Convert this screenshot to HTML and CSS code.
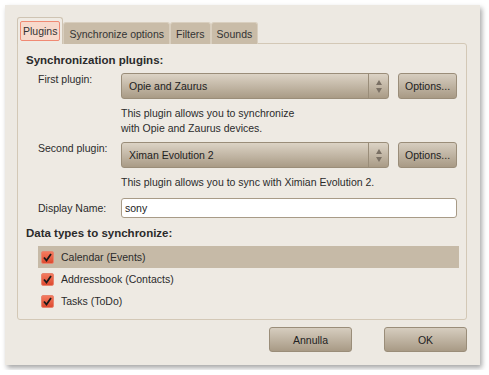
FILE: index.html
```html
<!DOCTYPE html>
<html lang="en">
<head>
  <meta charset="UTF-8">
  <title>Sync settings</title>
  <link rel="stylesheet" href="styles.css">
</head>
<body>
  <div class="window">
    <div class="tabs">
      <div class="tab active"><span class="focus">Plugins</span></div>
      <div class="tab">Synchronize options</div>
      <div class="tab">Filters</div>
      <div class="tab">Sounds</div>
    </div>
    <div class="panel">
      <div class="heading">Synchronization plugins:</div>
      <div class="form">
        <div class="label">First plugin:</div>
        <div class="field">
          <div class="combo"><span class="combo-text">Opie and Zaurus</span><span class="spin"><i class="up"></i><i class="down"></i></span></div>
          <button class="btn-options">Options...</button>
        </div>
        <div></div>
        <div class="desc">This plugin allows you to synchronize<br>with Opie and Zaurus devices.</div>

        <div class="label">Second plugin:</div>
        <div class="field">
          <div class="combo"><span class="combo-text">Ximan Evolution 2</span><span class="spin"><i class="up"></i><i class="down"></i></span></div>
          <button class="btn-options">Options...</button>
        </div>
        <div></div>
        <div class="desc desc-last">This plugin allows you to sync with Ximian Evolution 2.</div>

        <div class="label label-input">Display Name:</div>
        <div class="field"><div class="input">sony</div></div>
      </div>
      <div class="heading heading-2">Data types to synchronize:</div>
      <ul class="checks">
        <li class="selected"><span class="box"><svg width="11" height="11" viewBox="0 0 11 11"><path d="M2 5.5 L4.5 8.5 L9 2" fill="none" stroke="#1a1a1a" stroke-width="1.8"/></svg></span>Calendar (Events)</li>
        <li><span class="box"><svg width="11" height="11" viewBox="0 0 11 11"><path d="M2 5.5 L4.5 8.5 L9 2" fill="none" stroke="#1a1a1a" stroke-width="1.8"/></svg></span>Addressbook (Contacts)</li>
        <li><span class="box"><svg width="11" height="11" viewBox="0 0 11 11"><path d="M2 5.5 L4.5 8.5 L9 2" fill="none" stroke="#1a1a1a" stroke-width="1.8"/></svg></span>Tasks (ToDo)</li>
      </ul>
    </div>
    <div class="actions">
      <button class="btn">Annulla</button>
      <button class="btn">OK</button>
    </div>
  </div>
</body>
</html>
```

FILE: styles.css
```css
body {
  margin: 0;
  background: #fff;
  font-family: "Liberation Sans", Arial, sans-serif;
  font-size: 10.5px;
  color: #2b2b2b;
}
.window {
  margin: 5px;
  width: 475px;
  height: 360px;
  box-sizing: border-box;
  padding: 12px 13px 0 12px;
  background: #ede9e2;
  box-shadow: 2px 3px 5px rgba(0, 0, 0, 0.35);
}
.tabs {
  display: flex;
  align-items: flex-end;
  height: 27px;
  margin-bottom: -1px;
  position: relative;
  z-index: 1;
}
.tab {
  height: 22px;
  padding: 0 5px;
  display: flex;
  align-items: center;
  background: #c9bca8;
  border: 1px solid #d9cfbf;
  border-bottom: none;
  border-radius: 3px 3px 0 0;
  color: #333;
  box-sizing: border-box;
}
.tab.active {
  height: 27px;
  padding: 0 2px;
  background: #efebe4;
  border-color: #cfc4b3;
}
.focus {
  padding: 3px 2px;
  background: #f7d9cc;
  border: 1px solid #f08a74;
  border-radius: 2px;
}
.panel {
  height: 277px;
  box-sizing: border-box;
  border: 1px solid #d3c8b6;
  border-radius: 0 3px 3px 3px;
  background: #eeeae3;
  padding: 5px 0 0 8px;
}
.heading {
  font-weight: bold;
  font-size: 11.5px;
  height: 22px;
  line-height: 22px;
}
.heading-2 {
  height: 17px;
  line-height: 17px;
  margin-top: 7px;
}
.form {
  display: grid;
  grid-template-columns: 83px 336px;
  padding-left: 12px;
  margin-top: 2px;
}
.label {
  height: 26px;
  line-height: 13px;
}
.label-input {
  height: 20px;
  line-height: 20px;
}
.field {
  display: flex;
  gap: 9px;
}
.combo {
  width: 269px;
  height: 26px;
  box-sizing: border-box;
  border: 1px solid #9a8d79;
  border-radius: 3px;
  background: linear-gradient(#dcd3c5, #a99b86);
  display: flex;
  align-items: center;
}
.combo-text {
  flex: 1;
  padding-left: 7px;
  color: #222;
}
.spin {
  width: 19px;
  height: 100%;
  border-left: 1px solid #9a8d79;
  display: flex;
  flex-direction: column;
  align-items: center;
  justify-content: center;
  gap: 3px;
}
.up {
  border: 3px solid transparent;
  border-top: none;
  border-bottom: 5px solid #7a7064;
}
.down {
  border: 3px solid transparent;
  border-bottom: none;
  border-top: 5px solid #7a7064;
}
.btn-options {
  width: 59px;
  height: 26px;
  border: 1px solid #9a8d79;
  border-radius: 3px;
  background: linear-gradient(#d6cdbf, #a89a85);
  font: inherit;
  color: #222;
  padding: 0;
}
.desc {
  line-height: 15px;
  padding: 7px 0 6px;
}
.desc.desc-last {
  padding-bottom: 8px;
}
.input {
  width: 336px;
  height: 20px;
  box-sizing: border-box;
  border: 1px solid #a89b87;
  border-radius: 3px;
  background: #fff;
  padding-left: 3px;
  line-height: 18px;
  color: #222;
}
.checks {
  list-style: none;
  margin: 4px 0 0 12px;
  padding: 0;
  width: 421px;
}
.checks li {
  height: 22px;
  display: flex;
  align-items: center;
  gap: 7px;
  padding-left: 3px;
}
.checks li.selected {
  background: #c6baa7;
}
.box {
  width: 11px;
  height: 11px;
  border: 1px solid #e7846f;
  border-radius: 2px;
  background: linear-gradient(#f47a5e, #dd4a30);
  display: flex;
}
.actions {
  display: flex;
  justify-content: flex-end;
  gap: 32px;
  margin-top: 7px;
}
.btn {
  width: 83px;
  height: 25px;
  border: 1px solid #9a8d79;
  border-radius: 3px;
  background: linear-gradient(#d6cdbf, #a89a85);
  font: inherit;
  color: #222;
}
```
